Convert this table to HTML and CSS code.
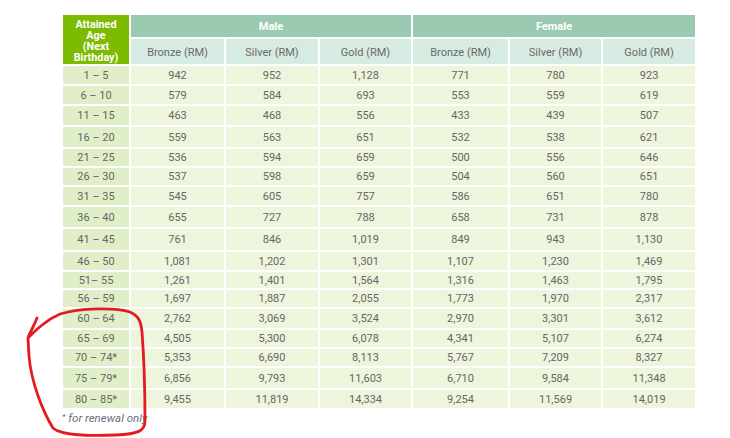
FILE: index.html
```html
<!DOCTYPE html>
<html lang="en">
<head>
<meta charset="utf-8">
<title>Premium Table</title>
<link rel="stylesheet" href="styles.css">
</head>
<body>
<div class="page">
  <table class="rates">
    <colgroup>
      <col class="c-age"><col class="c-mb"><col class="c-ms"><col class="c-mg"><col class="c-fb"><col class="c-fs"><col class="c-fg">
    </colgroup>
    <thead>
      <tr class="h-top">
        <th class="age-head" rowspan="2">Attained<br>Age<br>(Next<br>Birthday)</th>
        <th class="group" colspan="3">Male</th>
        <th class="group" colspan="3">Female</th>
      </tr>
      <tr class="h-sub">
        <th class="sub">Bronze (RM)</th>
        <th class="sub">Silver (RM)</th>
        <th class="sub">Gold (RM)</th>
        <th class="sub">Bronze (RM)</th>
        <th class="sub">Silver (RM)</th>
        <th class="sub">Gold (RM)</th>
      </tr>
    </thead>
    <tbody>
      <tr><td class="age">1 – 5</td><td>942</td><td>952</td><td>1,128</td><td>771</td><td>780</td><td>923</td></tr>
      <tr><td class="age">6 – 10</td><td>579</td><td>584</td><td>693</td><td>553</td><td>559</td><td>619</td></tr>
      <tr><td class="age">11 – 15</td><td>463</td><td>468</td><td>556</td><td>433</td><td>439</td><td>507</td></tr>
      <tr><td class="age">16 – 20</td><td>559</td><td>563</td><td>651</td><td>532</td><td>538</td><td>621</td></tr>
      <tr><td class="age">21 – 25</td><td>536</td><td>594</td><td>659</td><td>500</td><td>556</td><td>646</td></tr>
      <tr><td class="age">26 – 30</td><td>537</td><td>598</td><td>659</td><td>504</td><td>560</td><td>651</td></tr>
      <tr><td class="age">31 – 35</td><td>545</td><td>605</td><td>757</td><td>586</td><td>651</td><td>780</td></tr>
      <tr><td class="age">36 – 40</td><td>655</td><td>727</td><td>788</td><td>658</td><td>731</td><td>878</td></tr>
      <tr><td class="age">41 – 45</td><td>761</td><td>846</td><td>1,019</td><td>849</td><td>943</td><td>1,130</td></tr>
      <tr><td class="age">46 – 50</td><td>1,081</td><td>1,202</td><td>1,301</td><td>1,107</td><td>1,230</td><td>1,469</td></tr>
      <tr><td class="age">51– 55</td><td>1,261</td><td>1,401</td><td>1,564</td><td>1,316</td><td>1,463</td><td>1,795</td></tr>
      <tr><td class="age">56 – 59</td><td>1,697</td><td>1,887</td><td>2,055</td><td>1,773</td><td>1,970</td><td>2,317</td></tr>
      <tr><td class="age">60 – 64</td><td>2,762</td><td>3,069</td><td>3,524</td><td>2,970</td><td>3,301</td><td>3,612</td></tr>
      <tr><td class="age">65 – 69</td><td>4,505</td><td>5,300</td><td>6,078</td><td>4,341</td><td>5,107</td><td>6,274</td></tr>
      <tr><td class="age">70 – 74*</td><td>5,353</td><td>6,690</td><td>8,113</td><td>5,767</td><td>7,209</td><td>8,327</td></tr>
      <tr><td class="age">75 – 79*</td><td>6,856</td><td>9,793</td><td>11,603</td><td>6,710</td><td>9,584</td><td>11,348</td></tr>
      <tr><td class="age">80 – 85*</td><td>9,455</td><td>11,819</td><td>14,334</td><td>9,254</td><td>11,569</td><td>14,019</td></tr>
    </tbody>
  </table>
  <p class="note"><span class="star">*</span> for renewal only</p>
  <svg class="scribble" width="730" height="438" viewBox="0 0 730 438" aria-hidden="true">
    <path d="M37 318 C34 326 30 332 28 338 C36 330 46 320 60 314 C80 308 115 307 130 312 C139 316 141 322 142 332 C144 358 145 398 145 421 C145 431 138 434 116 435 C90 436 62 436 53 428 C43 412 31 382 29 356 L28 338" fill="none" stroke="#e31b1f" stroke-width="2.8" stroke-linecap="round" stroke-linejoin="round"/>
  </svg>
</div>
</body>
</html>
```
FILE: styles.css
```css
html, body {
  margin: 0;
  padding: 0;
  background: #ffffff;
}

.page {
  position: relative;
  width: 730px;
  height: 438px;
  overflow: hidden;
  font-family: Roboto, "Liberation Sans", Arial, sans-serif;
  color: #666666;
}

.rates {
  border-collapse: separate;
  border-spacing: 2px;
  margin: 13px 0 0 61px;
  table-layout: fixed;
  width: 636px;
  font-size: 11px;
  line-height: 13px;
}

.c-age { width: 66px; }
.c-mb { width: 93px; }
.c-ms { width: 92px; }
.c-mg { width: 91px; }
.c-fb { width: 95px; }
.c-fs { width: 91px; }
.c-fg { width: 92px; }

.rates th,
.rates td {
  padding: 0;
  text-align: center;
  vertical-align: middle;
}

.h-top th { height: 22px; }
.h-sub th { height: 23px; }

.age-head {
  background: #7dbb02;
  color: #ffffff;
  font-weight: 700;
  font-size: 10.8px;
  line-height: 11px;
}

.rates th.age-head {
  padding-top: 2px;
}

.group {
  background: #9acbb2;
  color: #ffffff;
  font-weight: 700;
}

.sub {
  background: #d6ebe1;
  color: #6a6a6a;
  font-weight: 400;
}

.rates th.sub {
  padding-top: 2px;
}

.rates td {
  background: #edf5dc;
  height: 18px;
}

.rates td.age {
  background: #e1efc8;
}

.rates tbody tr:nth-child(3) td,
.rates tbody tr:nth-child(13) td { height: 19px; }
.rates tbody tr:nth-child(4) td,
.rates tbody tr:nth-child(8) td,
.rates tbody tr:nth-child(16) td { height: 20px; }
.rates tbody tr:nth-child(9) td { height: 21px; }
.rates tbody tr:nth-child(5) td,
.rates tbody tr:nth-child(6) td,
.rates tbody tr:nth-child(12) td,
.rates tbody tr:nth-child(14) td,
.rates tbody tr:nth-child(15) td { height: 17px; }
.rates tbody tr:nth-child(11) td { height: 16px; }

.note {
  margin: 0 0 0 62px;
  font-size: 11.5px;
  line-height: 14px;
  font-style: italic;
  color: #6c6c7c;
}

.star {
  font-size: 8px;
  vertical-align: 3px;
}

.scribble {
  position: absolute;
  left: 0;
  top: 0;
  pointer-events: none;
}
```
